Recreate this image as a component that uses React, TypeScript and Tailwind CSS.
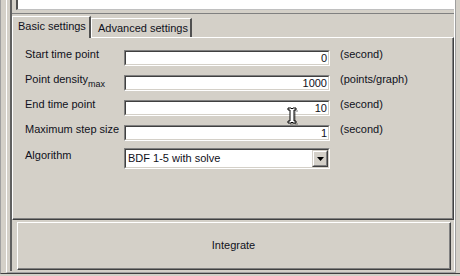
import React from 'react';

const rows = [
  { label: 'Start time point', value: '0', unit: '(second)' },
  { label: 'Point density', sub: 'max', value: '1000', unit: '(points/graph)' },
  { label: 'End time point', value: '10', unit: '(second)' },
  { label: 'Maximum step size', value: '1', unit: '(second)' },
];

// classic sunken edit box
const Edit = ({ value }: { value: string }) => (
  <div className="h-[16px] w-[206px] border border-t-[#808080] border-l-[#808080] border-b-white border-r-white">
    <div className="h-full border border-t-[#404040] border-l-[#404040] border-b-[#d4d0c8] border-r-[#d4d0c8] bg-white text-right pr-[1px] leading-[12px] text-[#101020]">
      {value}
    </div>
  </div>
);

const App = () => {
  return (
    <div className="relative w-[460px] h-[276px] bg-[#d4d0c8] overflow-hidden font-['Liberation_Sans',Arial,sans-serif] text-[11px] text-[#101020]">
      <div className="h-[274px] flex border-l border-l-[#a0a0a0] border-b border-b-[#404040] pl-[5px]">
        <div className="flex-1 flex mr-[4px] border-l border-l-white border-r border-r-[#a0a0a0] border-b border-b-[#a0a0a0] pl-[3px] pb-[1px]">
          <div className="flex-1 flex flex-col border-l-2 border-l-[#606060] border-r border-r-white">
            {/* top text area, cut off */}
            <div className="ml-[4px] h-[10px] bg-white border-l-2 border-l-[#505050] border-b border-b-[#c0c0c0]" />
            <div className="mt-[3px] h-px bg-[#808080]" />

            {/* tabs */}
            <div className="mt-[2px] flex items-end h-[21px]">
              <div className="relative z-10 h-[22px] w-[79px] -mb-px bg-[#d4d0c8] border-t border-l border-t-white border-l-white border-r-2 border-r-[#505050] pl-[5px] pt-[3px] leading-[13px]">
                Basic settings
              </div>
              <div className="h-[19px] w-[101px] border-t border-l border-t-white border-l-white border-r-2 border-r-[#505050] pl-[6px] pt-[3px] leading-[13px]">
                Advanced settings
              </div>
            </div>

            {/* tab panel */}
            <div className="h-[183px] border border-t-white border-l-white border-b-[#404040] border-r-[#404040]">
              <div className="h-full border-b border-r border-b-[#808080] border-r-[#808080] pl-[12px] pt-[12px]">
                <div className="flex flex-col gap-[9px]">
                  {rows.map((r, i) => (
                    <div key={i} className="flex items-start h-[16px]">
                      <div className="w-[99px] -mt-[2px] leading-[13px] whitespace-nowrap">
                        {r.label}
                        {r.sub && <span className="text-[9px] relative top-[4px]">{r.sub}</span>}
                      </div>
                      <Edit value={r.value} />
                      <div className="ml-[10px] -mt-[2px] leading-[13px]">{r.unit}</div>
                    </div>
                  ))}
                </div>

                <div className="flex items-start mt-[7px]">
                  <div className="w-[99px] leading-[13px] mt-[1px]">Algorithm</div>
                  <div className="h-[21px] w-[206px] border border-t-[#808080] border-l-[#808080] border-b-white border-r-white">
                    <div className="h-full flex border border-t-[#404040] border-l-[#404040] border-b-[#d4d0c8] border-r-[#d4d0c8] bg-white">
                      <div className="flex-1 pl-[2px] leading-[17px]">BDF 1-5 with solve</div>
                      <div className="w-[16px] h-[17px] flex items-center justify-center bg-[#d4d0c8] border border-t-[#d4d0c8] border-l-[#d4d0c8] border-b-[#404040] border-r-[#404040]">
                        <div className="h-full w-full flex items-center justify-center border border-t-white border-l-white border-b-[#808080] border-r-[#808080]">
                          <svg width="7" height="4" viewBox="0 0 7 4">
                            <path d="M0 0h7L3.5 4z" fill="#000" />
                          </svg>
                        </div>
                      </div>
                    </div>
                  </div>
                </div>
              </div>
            </div>

            {/* button */}
            <div className="mt-[2px] ml-[5px] mr-[3px] h-[48px] border border-t-white border-l-white border-b-[#404040] border-r-[#404040]">
              <div className="h-full flex items-center justify-center border-b border-r border-b-[#808080] border-r-[#808080]">
                Integrate
              </div>
            </div>
          </div>
        </div>
      </div>

      {/* I-beam mouse cursor */}
      <svg className="absolute left-[287px] top-[107px]" width="11" height="19" viewBox="0 0 11 19">
        <path d="M2 2h3l1 1 1-1h3v2H8v11h2v2H7l-1-1-1 1H2v-2h2V4H2z" fill="#000" opacity="0.25" transform="translate(1 1)" />
        <path d="M1 1h3l1 1 1-1h3v2H7v11h2v2H6l-1-1-1 1H1v-2h2V3H1z" fill="#fff" stroke="#000" strokeWidth="1" />
      </svg>
    </div>
  );
};

export default App;
